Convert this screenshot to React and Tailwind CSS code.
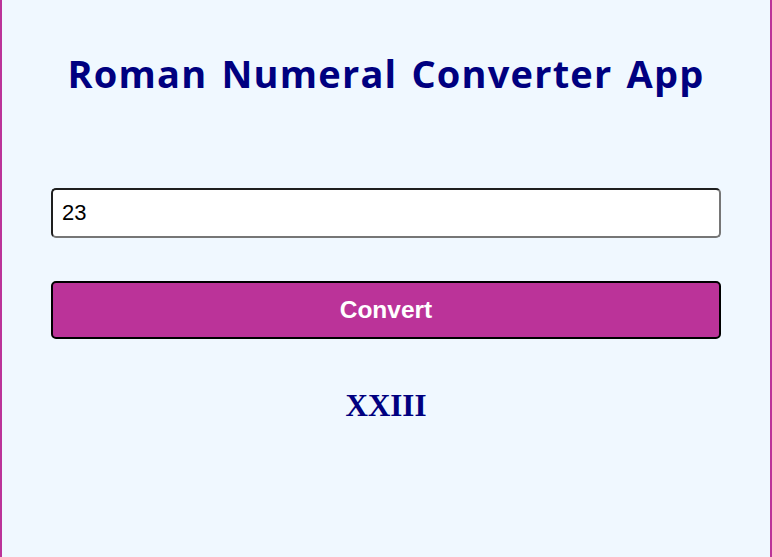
export default function App() {
  return (
    <div className="min-h-screen w-full bg-[#f0f8ff] border-x-2 border-[#bb3399] px-[49px]">
      <h1 className="pt-[46px] text-center text-[38px] leading-[54px] font-bold text-[#000080] [font-family:'Open_Sans',sans-serif] tracking-[1.2px] [word-spacing:3px]">
        Roman Numeral Converter App
      </h1>
      <div className="mt-[88px]">
        <input
          defaultValue="23"
          className="block w-full h-[50px] bg-white rounded-[5px] border-2 border-t-[#1f1f1f] border-l-[#1f1f1f] border-r-[#767676] border-b-[#767676] px-[9px] text-[22px] text-black [font-family:'Liberation_Sans',Arial,sans-serif] outline-none"
        />
      </div>
      <button className="mt-[43px] block w-full h-[58px] bg-[#bb3399] border-2 border-black rounded-[5px] text-white text-[24.5px] font-bold [font-family:'Liberation_Sans',Arial,sans-serif]">
        Convert
      </button>
      <div className="mt-[47px] text-center text-[31px] leading-[40px] font-bold text-[#000080] [font-family:'Liberation_Serif','Times_New_Roman',serif]">
        XXIII
      </div>
    </div>
  );
}
